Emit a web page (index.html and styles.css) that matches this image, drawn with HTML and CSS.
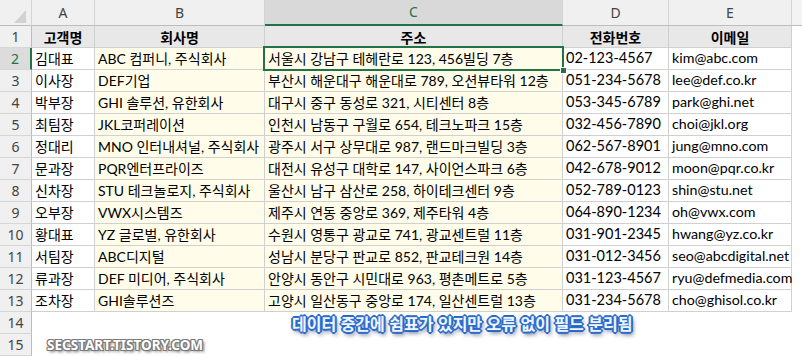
FILE: index.html
```html
<!DOCTYPE html>
<html lang="ko">
<head>
<meta charset="utf-8">
<link rel="stylesheet" href="styles.css">
</head>
<body>
<div class="sheet">
  <div class="ch corner"><span class="tri"></span></div>
  <div class="ch">A</div>
  <div class="ch">B</div>
  <div class="ch active">C</div>
  <div class="ch">D</div>
  <div class="ch">E</div>
  <div class="ch last"></div>

  <div class="rh">1</div>
  <div class="c th">고객명</div>
  <div class="c th">회사명</div>
  <div class="c th">주소</div>
  <div class="c th">전화번호</div>
  <div class="c th">이메일</div>
  <div class="e"></div>

  <div class="rh active">2</div>
  <div class="c">김대표</div>
  <div class="c y">ABC 컴퍼니, 주식회사</div>
  <div class="c y sel">서울시 강남구 테헤란로 123, 456빌딩 7층<span class="handle"></span></div>
  <div class="c ph">02-123-4567</div>
  <div class="c em">kim@abc.com</div>
  <div class="e"></div>

  <div class="rh">3</div>
  <div class="c">이사장</div>
  <div class="c y">DEF기업</div>
  <div class="c y">부산시 해운대구 해운대로 789, 오션뷰타워 12층</div>
  <div class="c ph">051-234-5678</div>
  <div class="c em">lee@def.co.kr</div>
  <div class="e"></div>

  <div class="rh">4</div>
  <div class="c">박부장</div>
  <div class="c y">GHI 솔루션, 유한회사</div>
  <div class="c y">대구시 중구 동성로 321, 시티센터 8층</div>
  <div class="c ph">053-345-6789</div>
  <div class="c em">park@ghi.net</div>
  <div class="e"></div>

  <div class="rh">5</div>
  <div class="c">최팀장</div>
  <div class="c y">JKL코퍼레이션</div>
  <div class="c y">인천시 남동구 구월로 654, 테크노파크 15층</div>
  <div class="c ph">032-456-7890</div>
  <div class="c em">choi@jkl.org</div>
  <div class="e"></div>

  <div class="rh">6</div>
  <div class="c">정대리</div>
  <div class="c y">MNO 인터내셔널, 주식회사</div>
  <div class="c y">광주시 서구 상무대로 987, 랜드마크빌딩 3층</div>
  <div class="c ph">062-567-8901</div>
  <div class="c em">jung@mno.com</div>
  <div class="e"></div>

  <div class="rh">7</div>
  <div class="c">문과장</div>
  <div class="c y">PQR엔터프라이즈</div>
  <div class="c y">대전시 유성구 대학로 147, 사이언스파크 6층</div>
  <div class="c ph">042-678-9012</div>
  <div class="c em">moon@pqr.co.kr</div>
  <div class="e"></div>

  <div class="rh">8</div>
  <div class="c">신차장</div>
  <div class="c y">STU 테크놀로지, 주식회사</div>
  <div class="c y">울산시 남구 삼산로 258, 하이테크센터 9층</div>
  <div class="c ph">052-789-0123</div>
  <div class="c em">shin@stu.net</div>
  <div class="e"></div>

  <div class="rh">9</div>
  <div class="c">오부장</div>
  <div class="c y">VWX시스템즈</div>
  <div class="c y">제주시 연동 중앙로 369, 제주타워 4층</div>
  <div class="c ph">064-890-1234</div>
  <div class="c em">oh@vwx.com</div>
  <div class="e"></div>

  <div class="rh">10</div>
  <div class="c">황대표</div>
  <div class="c y">YZ 글로벌, 유한회사</div>
  <div class="c y">수원시 영통구 광교로 741, 광교센트럴 11층</div>
  <div class="c ph">031-901-2345</div>
  <div class="c em">hwang@yz.co.kr</div>
  <div class="e"></div>

  <div class="rh">11</div>
  <div class="c">서팀장</div>
  <div class="c y">ABC디지털</div>
  <div class="c y">성남시 분당구 판교로 852, 판교테크원 14층</div>
  <div class="c ph">031-012-3456</div>
  <div class="c em">seo@abcdigital.net</div>
  <div class="e"></div>

  <div class="rh">12</div>
  <div class="c">류과장</div>
  <div class="c y">DEF 미디어, 주식회사</div>
  <div class="c y">안양시 동안구 시민대로 963, 평촌메트로 5층</div>
  <div class="c ph">031-123-4567</div>
  <div class="c em">ryu@defmedia.com</div>
  <div class="e"></div>

  <div class="rh">13</div>
  <div class="c">조차장</div>
  <div class="c y">GHI솔루션즈</div>
  <div class="c y">고양시 일산동구 중앙로 174, 일산센트럴 13층</div>
  <div class="c ph">031-234-5678</div>
  <div class="c em">cho@ghisol.co.kr</div>
  <div class="e"></div>

  <div class="rh">14</div>
  <div class="blank"></div>
  <div class="rh">15</div>
  <div class="blank"></div>

  <div class="caption">데이터 중간에 쉼표가 있지만 오류 없이 필드 분리됨</div>
  <div class="brand">SECSTART.TISTORY.COM</div>
</div>
</body>
</html>
```

FILE: styles.css
```css
* { box-sizing: border-box; }
html, body {
  margin: 0;
  padding: 0;
  background: #ffffff;
  overflow: hidden;
}
body {
  width: 802px;
  height: 358px;
  font-family: "Lato", "Noto Sans CJK KR", sans-serif;
  font-size: 14px;
  color: #000;
}
.sheet {
  position: relative;
  display: grid;
  grid-template-columns: 32px 63px 170px 298px 106px 123px 10px;
  grid-template-rows: 26px;
  grid-auto-rows: 22px;
}
.ch {
  background: #f0f0f0;
  border-right: 1px solid #d4d4d4;
  border-bottom: 1px solid #bdbdbd;
  color: #444;
  font-family: "Noto Sans", sans-serif;
  font-size: 14px;
  display: flex;
  align-items: center;
  justify-content: center;
  line-height: 1;
}
.ch.last { border-right: none; background: #f3f3f3; }
.ch.active {
  background: #d9d9d9;
  color: #217346;
  border-bottom: 2px solid #217346;
}
.corner { position: relative; }
.tri {
  width: 0;
  height: 0;
  border-left: 12px solid transparent;
  border-bottom: 13px solid #d2d2d2;
  margin: 7px 0 0 8px;
}
.rh {
  background: #f0f0f0;
  border-right: 1px solid #bdbdbd;
  border-bottom: 1px solid #d6d6d6;
  color: #444;
  font-family: "Noto Sans", sans-serif;
  font-size: 14px;
  display: flex;
  align-items: center;
  justify-content: center;
}
.rh.active {
  background: #dcdcdc;
  color: #217346;
  border-right: 2px solid #217346;
}
.c {
  border-right: 1px solid #d0d0d0;
  border-bottom: 1px solid #d0d0d0;
  padding: 0 3px;
  white-space: nowrap;
  display: flex;
  align-items: center;
  line-height: 1;
  background: #ffffff;
}
.c.ph { font-size: 14.5px; }
.c.em { font-size: 14.25px; }
.c.y { background: #fffdea; }
.c.th {
  background: #e8e8e8;
  font-family: "Noto Sans CJK KR", sans-serif;
  font-size: 14px;
  font-weight: 700;
  justify-content: center;
}
.c.sel { position: relative; }
.c.sel::before {
  content: "";
  position: absolute;
  left: -2px;
  top: -2px;
  right: -2px;
  bottom: -2px;
  border: 2px solid #217346;
  pointer-events: none;
}
.handle {
  position: absolute;
  right: -5px;
  bottom: -5px;
  width: 7px;
  height: 7px;
  background: #217346;
  border: 1px solid #ffffff;
}
.e { background: #ffffff; }
.blank { grid-column: 2 / 8; background: #ffffff; }
.caption {
  position: absolute;
  left: 292px;
  top: 313px;
  font-family: "Noto Sans CJK KR", sans-serif;
  font-size: 16px;
  font-weight: 700;
  color: #eef6ff;
  white-space: nowrap;
  line-height: 20px;
  text-shadow:
    1px 0 0 #2f6fd0, -1px 0 0 #2f6fd0, 0 1px 0 #2f6fd0, 0 -1px 0 #2f6fd0,
    1px 1px 0 #2f6fd0, -1px -1px 0 #2f6fd0, 1px -1px 0 #2f6fd0, -1px 1px 0 #2f6fd0,
    2px 0 0 #2a63bb, -2px 0 0 #2a63bb, 0 2px 0 #2a63bb, 0 -2px 0 #2a63bb,
    2px 3px 4px rgba(10, 30, 80, 0.75);
}
.brand {
  position: absolute;
  left: 47px;
  top: 336px;
  font-family: "Noto Sans", "Open Sans", sans-serif;
  font-size: 13.5px;
  font-weight: 700;
  color: #ffffff;
  white-space: nowrap;
  line-height: 18px;
  text-shadow:
    1px 0 0 #7a7a7a, -1px 0 0 #7a7a7a, 0 1px 0 #7a7a7a, 0 -1px 0 #7a7a7a,
    1px 1px 0 #7a7a7a, -1px -1px 0 #7a7a7a, 1px -1px 0 #7a7a7a, -1px 1px 0 #7a7a7a,
    2px 2px 3px rgba(0, 0, 0, 0.6);
}
```
